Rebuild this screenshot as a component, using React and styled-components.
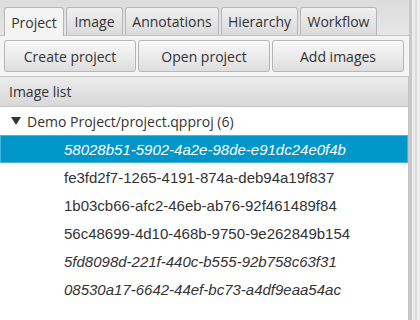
import React from "react";
import styled, { createGlobalStyle } from "styled-components";

const GlobalStyle = createGlobalStyle`
  html, body {
    margin: 0;
    padding: 0;
    background: #f4f4f4;
  }
`;

const Frame = styled.div`
  width: 420px;
  height: 320px;
  display: flex;
  overflow: hidden;
  font-family: "Open Sans", "Noto Sans", sans-serif;
  color: #333;
`;

const Main = styled.div`
  width: 409px;
  display: flex;
  flex-direction: column;
`;

const Divider = styled.div`
  width: 11px;
  background: linear-gradient(
    to right,
    #c8c8c8 0 3px,
    #ececec 3px 6px,
    #dcdcdc 6px 8px,
    #f0f0f0 8px
  );
`;

const TabHeader = styled.div`
  height: 36px;
  box-sizing: border-box;
  padding: 7px 0 0 4px;
  display: flex;
  gap: 2px;
  background: linear-gradient(#dcdcdc, #e6e6e6);
  border-bottom: 1px solid #c4c4c4;
`;

const Tab = styled.div`
  width: ${(p) => p.w}px;
  box-sizing: border-box;
  border: 1px solid #b5b5b5;
  border-bottom: none;
  border-radius: 3px 3px 0 0;
  font-size: 14px;
  display: flex;
  align-items: center;
  justify-content: center;
  background: ${(p) =>
    p.active ? "#f4f4f4" : "linear-gradient(#f0f0f0, #dadada)"};
  margin-bottom: ${(p) => (p.active ? "-1px" : "0")};
`;

const ButtonRow = styled.div`
  display: flex;
  gap: 2px;
  padding: 4px 5px 4px 4px;
`;

const Button = styled.div`
  flex: 1;
  height: 32px;
  box-sizing: border-box;
  border: 1px solid #b5b5b5;
  border-radius: 3px;
  background: linear-gradient(#f8f8f8, #dedede);
  box-shadow: inset 0 1px 0 #ffffff;
  font-size: 14px;
  display: flex;
  align-items: center;
  justify-content: center;
`;

const ListHeader = styled.div`
  height: 31px;
  box-sizing: border-box;
  border: 1px solid #c4c4c4;
  border-left: none;
  background: linear-gradient(#ececec, #d8d8d8);
  font-size: 14px;
  padding-left: 9px;
  display: flex;
  align-items: center;
`;

const Tree = styled.div`
  flex: 1;
  background: #ffffff;
  border-right: 1px solid #c4c4c4;
`;

const Row = styled.div`
  height: ${(p) => p.h || 28}px;
  box-sizing: border-box;
  display: flex;
  align-items: center;
  padding-left: ${(p) => p.indent}px;
  font-family: ${(p) =>
    p.plain ? '"Open Sans", "Noto Sans", sans-serif' : '"Liberation Sans", Arial, sans-serif'};
  font-size: ${(p) => (p.plain ? 14 : 15)}px;
  font-style: ${(p) => (p.italic ? "italic" : "normal")};
  color: ${(p) => (p.selected ? "#ffffff" : "#333")};
  background: ${(p) => (p.selected ? "#0096c9" : "transparent")};
  border: 1px solid ${(p) => (p.selected ? "#45b5e0" : "transparent")};
  white-space: nowrap;
`;

const Arrow = styled.span`
  width: 0;
  height: 0;
  border-left: 5px solid transparent;
  border-right: 5px solid transparent;
  border-top: 8px solid #333;
  margin-right: 6px;
`;

const tabs = [
  ["Project", 60],
  ["Image", 57],
  ["Annotations", 94],
  ["Hierarchy", 77],
  ["Workflow", 77],
];

const images = [
  ["58028b51-5902-4a2e-98de-e91dc24e0f4b", true],
  ["fe3fd2f7-1265-4191-874a-deb94a19f837", false],
  ["1b03cb66-afc2-46eb-ab76-92f461489f84", false],
  ["56c48699-4d10-468b-9750-9e262849b154", false],
  ["5fd8098d-221f-440c-b555-92b758c63f31", true],
  ["08530a17-6642-44ef-bc73-a4df9eaa54ac", true],
];

export default function App() {
  return (
    <>
      <GlobalStyle />
      <Frame>
        <Main>
          <TabHeader>
            {tabs.map(([t, w], i) => (
              <Tab key={t} w={w} active={i === 0}>
                {t}
              </Tab>
            ))}
          </TabHeader>
          <ButtonRow>
            <Button>Create project</Button>
            <Button>Open project</Button>
            <Button>Add images</Button>
          </ButtonRow>
          <ListHeader>Image list</ListHeader>
          <Tree>
            <Row indent={10} plain h={28}>
              <Arrow />
              Demo Project/project.qpproj (6)
            </Row>
            {images.map(([id, italic], i) => (
              <Row key={id} indent={63} italic={italic} selected={i === 0}>
                {id}
              </Row>
            ))}
          </Tree>
        </Main>
        <Divider />
      </Frame>
    </>
  );
}
